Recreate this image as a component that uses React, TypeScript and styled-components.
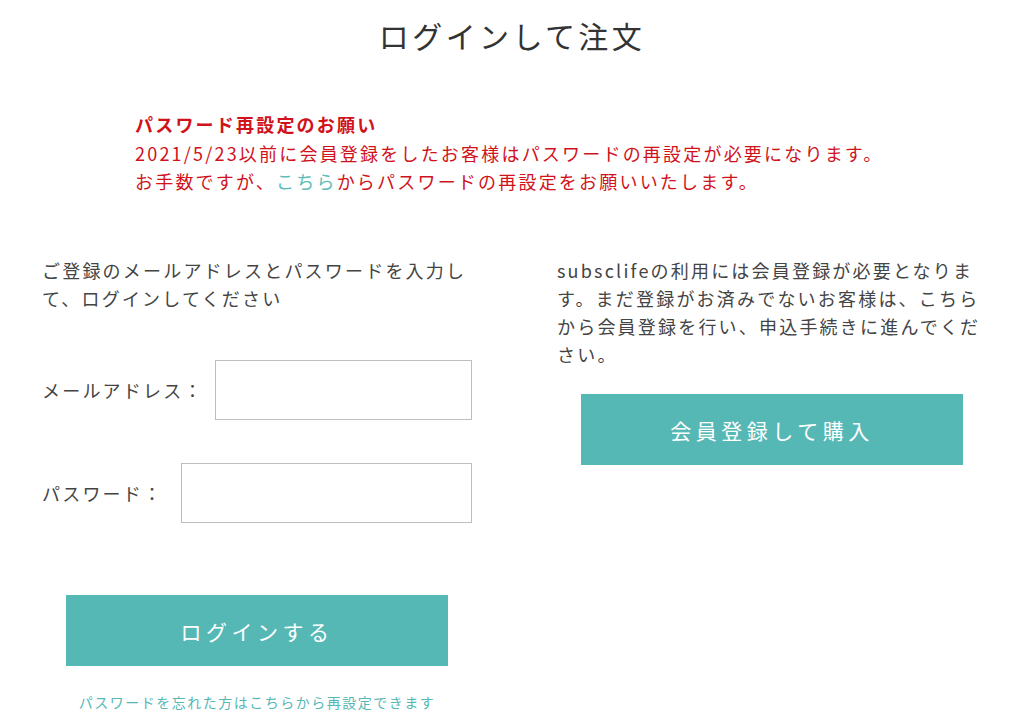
import React, { useState } from 'react';
import styled, { createGlobalStyle } from 'styled-components';

const GlobalStyle = createGlobalStyle`
  html, body {
    margin: 0;
    padding: 0;
    background: #fff;
  }
  body {
    font-family: "Noto Sans CJK JP", "Noto Sans", sans-serif;
    color: #444;
  }
`;

const teal = '#56b8b5';
const red = '#d0121b';

const App: React.FC = () => {
  const [email, setEmail] = useState('');
  const [password, setPassword] = useState('');

  return (
    <Page>
      <GlobalStyle />
      <Title>ログインして注文</Title>

      <Notice>
        <NoticeTitle>パスワード再設定のお願い</NoticeTitle>
        <NoticeText>
          2021/5/23以前に会員登録をしたお客様はパスワードの再設定が必要になります。
          <br />
          お手数ですが、<InlineLink href="#">こちら</InlineLink>からパスワードの再設定をお願いいたします。
        </NoticeText>
      </Notice>

      <Columns>
        <Column>
          <Lead>ご登録のメールアドレスとパスワードを入力して、ログインしてください</Lead>
          <Field top={48} gap={11}>
            <Label>メールアドレス：</Label>
            <Input
              type="email"
              value={email}
              onChange={({ target }) => setEmail(target.value)}
            />
          </Field>
          <Field top={43} gap={18}>
            <Label>パスワード：</Label>
            <Input
              type="password"
              value={password}
              onChange={({ target }) => setPassword(target.value)}
            />
          </Field>
          <ActionButton top={72}>ログインする</ActionButton>
          <ForgotLink href="#">パスワードを忘れた方はこちらから再設定できます</ForgotLink>
        </Column>

        <Column>
          <Lead>
            subsclifeの利用には会員登録が必要となります。まだ登録がお済みでないお客様は、こちらから会員登録を行い、申込手続きに進んでください。
          </Lead>
          <ActionButton top={26}>会員登録して購入</ActionButton>
        </Column>
      </Columns>
    </Page>
  );
};

const Page = styled.div`
  width: 1024px;
  padding-top: 13px;
`;

const Title = styled.h1`
  margin: 0;
  text-align: center;
  font-size: 30px;
  font-weight: 400;
  line-height: 44px;
  letter-spacing: 3.4px;
  color: #333;
`;

const Notice = styled.div`
  margin-top: 53px;
  padding-left: 135px;
  font-size: 18px;
  line-height: 28px;
  letter-spacing: 2.2px;
  color: ${red};
`;

const NoticeTitle = styled.div`
  font-weight: 700;
  line-height: 29px;
`;

const NoticeText = styled.p`
  margin: 0;
`;

const InlineLink = styled.a`
  color: #5fbdb9;
  text-decoration: none;
`;

const Columns = styled.div`
  display: grid;
  grid-template-columns: 430px 430px;
  column-gap: 85px;
  padding-left: 42px;
  margin-top: 61px;
`;

const Column = styled.div`
  display: flex;
  flex-direction: column;
`;

const Lead = styled.p`
  margin: 0;
  font-size: 18px;
  line-height: 28px;
  letter-spacing: 2.2px;
  color: #444;
`;

const Field = styled.div<{ top: number; gap: number }>`
  display: flex;
  align-items: center;
  gap: ${({ gap }) => gap}px;
  margin-top: ${({ top }) => top}px;
`;

const Label = styled.label`
  font-size: 18px;
  letter-spacing: 2.2px;
  white-space: nowrap;
  color: #444;
`;

const Input = styled.input`
  flex: 1;
  min-width: 0;
  height: 60px;
  box-sizing: border-box;
  border: 1px solid #bdbdbd;
  background: #fff;
  padding: 0 12px;
  font-size: 16px;
  outline: none;
`;

const ActionButton = styled.button<{ top: number }>`
  align-self: center;
  width: 382px;
  height: 71px;
  margin-top: ${({ top }) => top}px;
  border: none;
  background: ${teal};
  color: #fff;
  font-family: "Noto Sans CJK JP", "Noto Sans", sans-serif;
  font-size: 21px;
  letter-spacing: 4.5px;
  cursor: pointer;
`;

const ForgotLink = styled.a`
  align-self: center;
  margin-top: 26px;
  font-size: 14px;
  line-height: 20px;
  letter-spacing: 1.5px;
  color: ${teal};
  text-decoration: none;
`;

export default App;
